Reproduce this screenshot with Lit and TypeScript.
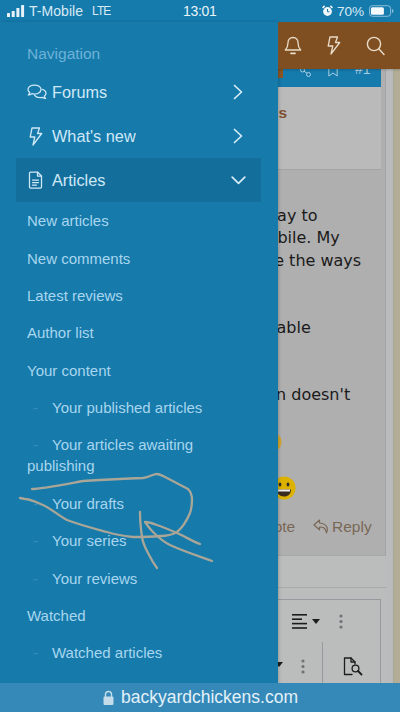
import { LitElement, html, css, svg } from "lit";
import { customElement } from "lit/decorators.js";

const sub1 = ["New articles", "New comments", "Latest reviews", "Author list", "Your content"];

const chevronRight = html`<svg class="chev" width="10" height="16" viewBox="0 0 10 16"><path d="M1.5 1.5 8.5 8l-7 6.5" fill="none" stroke="currentColor" stroke-width="1.7" stroke-linecap="round" stroke-linejoin="round"/></svg>`;
const chevronDown = html`<svg class="chev down" width="15" height="9" viewBox="0 0 15 9"><path d="M1.2 1.2 7.5 7.4l6.3-6.2" fill="none" stroke="currentColor" stroke-width="1.7" stroke-linecap="round" stroke-linejoin="round"/></svg>`;
const boltPath = "M5 1h7.5l-2 5.5h4.2L6 18l1.8-8H3.2z";

@customElement("app-root")
export class AppRoot extends LitElement {
  static styles = css`
    :host { display: block; width: 400px; height: 712px; position: relative; overflow: hidden; font-family: "Liberation Sans", Arial, sans-serif; background: #157aac; }
    .shell { display: flex; flex-direction: column; height: 712px; }
    .status { height: 22px; flex: none; background: #157aac; color: #d8ebf5; display: flex; align-items: center; font-size: 14px; padding: 0 6px 0 7px; }
    .bars { margin-right: 4px; flex: none; }
    .carrier { width: 63px; flex: none; letter-spacing: 0.05px; }
    .lte { width: 91px; flex: none; font-size: 12px; letter-spacing: -0.9px; }
    .time { width: 139px; flex: none; font-size: 14px; font-weight: 500; color: #eaf4f9; letter-spacing: -0.3px; }
    .alarm { margin-right: 4px; flex: none; }
    .pct { width: 26px; flex: none; margin-right: 6px; font-size: 13.6px; white-space: nowrap; }
    .main { flex: 1; display: flex; min-height: 0; }
    .drawer { width: 278px; flex: none; background: #167aab; box-sizing: border-box; padding: 21px 17px 0 16px; overflow: hidden; box-shadow: 1px 0 3px rgba(0,0,0,.18); z-index: 1; }
    .nav-title { font-size: 15.5px; line-height: 22px; height: 27px; padding-left: 11px; color: #6db2d8; }
    .row { height: 44px; display: flex; align-items: center; padding-left: 11px; padding-right: 18px; color: #cfe9f7; font-size: 16.3px; }
    .row.active { background: #146e9c; }
    .ico { width: 25px; flex: none; display: flex; align-items: center; }
    .label { flex: 1; }
    .chev { color: #d6edf8; }
    .chev.down { margin-right: -3px; }
    .items { padding: 0 0 0 11px; }
    .item { font-size: 15px; line-height: 21px; padding: 8.2px 0; color: #a8d6ee; }
    .dash { display: inline-block; width: 25px; box-sizing: border-box; padding-left: 6px; color: #348cba; }
    .page { flex: 1; min-width: 0; overflow: hidden; display: flex; flex-direction: column; background: #bbbdbd; position: relative; }
    .topbar { height: 47px; flex: none; background: #7f4f21; display: flex; align-items: center; gap: 23px; padding-left: 6px; color: #e9dcc8; position: relative; z-index: 1; box-shadow: 0 1px 2px rgba(0,0,0,.2); }
    .columns { flex: 1; display: flex; min-height: 0; }
    .content { width: 108px; flex: none; display: flex; flex-direction: column; }
    .rail { width: 7px; flex: none; background: #b9bbbd; }
    .tan { flex: 1; background: #b4ad95; border-left: 1px solid #a9a796; }
    .post { height: 487px; flex: none; background: #afafaf; border-right: 1px solid #a0a4a7; border-bottom: 1px solid #a4a6a7; box-sizing: border-box; display: flex; flex-direction: column; }
    .bluebar { height: 18px; flex: none; width: 103px; background: #157aac; overflow: hidden; display: flex; color: #a7cde0; }
    .tab { width: 5px; height: 9px; background: #8a5523; margin-right: 17px; }
    .bar-ico { margin-top: -7px; margin-right: 17px; }
    .bar-num { margin-top: -8px; font-size: 14px; line-height: 16px; }
    .head { height: 83px; flex: none; width: 103px; background: #bababa; border-bottom: 1px solid #a2a4a5; box-sizing: border-box; padding-top: 17px; font: bold 15.5px/18px "Liberation Sans", sans-serif; color: #7f5130; }
    .head span { display: block; margin-left: -9px; }
    .body { padding-top: 35px; font: 16px/22.4px "DejaVu Sans", sans-serif; color: #1a1a1a; white-space: nowrap; }
    .line { height: 22.4px; }
    .m1 { margin-left: -14px; }
    .m2 { margin-left: -26px; }
    .m3 { margin-left: -22px; }
    .m4 { margin-left: -20px; }
    .m5 { margin-left: -2px; }
    .emo1 { display: block; margin-left: -18px; margin-top: 2px; height: 22px; }
    .emo2 { display: block; margin-left: -6px; margin-top: 23px; height: 24px; }
    .foot { display: flex; align-items: center; color: #7a6857; font-size: 15.5px; white-space: nowrap; margin-top: 18px; }
    .quote { margin-left: -25px; width: 60px; flex: none; }
    .reply-ico { margin-right: 3px; }
    .gap { height: 31px; flex: none; border-bottom: 1px solid #a9abab; }
    .editor { margin-top: 11px; width: 103px; flex: 1; border-top: 1px solid #979b9f; border-right: 1px solid #979b9f; box-sizing: border-box; display: flex; flex-direction: column; color: #1c1c1c; }
    .tool1 { height: 42px; flex: none; display: flex; align-items: center; padding-left: 14px; }
    .tool2 { flex: 1; display: flex; }
    .caret { width: 0; height: 0; border-left: 4px solid transparent; border-right: 4px solid transparent; border-top: 5px solid #1c1c1c; margin-left: 5px; }
    .dots { margin-left: 19px; color: #6f7275; }
    .caret2 { margin-left: -3px; margin-top: 20px; }
    .dots2 { margin-left: 18px; margin-top: 17px; color: #6f7275; }
    .tool-left { width: 44px; flex: none; display: flex; align-items: flex-start; border-right: 1px solid #979b9f; }
    .finder { margin: 15px 0 0 20px; }
    .url { height: 29px; flex: none; background: #3589b8; color: #e3f1f8; font-size: 17.5px; display: flex; align-items: center; justify-content: center; gap: 6px; position: relative; z-index: 2; }
    .scribble { position: absolute; left: 0; top: 0; z-index: 3; pointer-events: none; }
  `;

  render() {
    return html`
      <div class="shell">
        <div class="status">
          <svg class="bars" width="18" height="12" viewBox="0 0 18 12" fill="#e8f3f9"><rect x="0" y="8" width="3" height="4" rx=".6"/><rect x="4.7" y="6" width="3" height="6" rx=".6"/><rect x="9.4" y="3" width="3" height="9" rx=".6"/><rect x="14.1" y="0" width="3" height="12" rx=".6"/></svg>
          <span class="carrier">T-Mobile</span>
          <span class="lte">LTE</span>
          <span class="time">13:01</span>
          <svg class="alarm" width="11" height="12" viewBox="0 0 11 12"><circle cx="5.5" cy="6.5" r="4.4" fill="#f0f6fa"/><path d="M5.5 4v2.8H7.5" fill="none" stroke="#157aac" stroke-width="1"/><path d="M.6 3 2.6.9M10.4 3 8.4.9" stroke="#f0f6fa" stroke-width="1.6"/></svg>
          <span class="pct">70%</span>
          <svg width="26" height="12" viewBox="0 0 26 12"><rect x=".5" y=".5" width="22" height="11" rx="3" fill="none" stroke="#8fc2dd"/><rect x="2" y="2" width="13.5" height="8" rx="1.6" fill="#f2f8fb"/><path d="M24 4v4c.9-.3 1.4-1 1.4-2S24.900 4.300 24 4z" fill="#8fc2dd"/></svg>
        </div>
        <div class="main">
          <nav class="drawer">
            <div class="nav-title">Navigation</div>
            <div class="row">
              <span class="ico"><svg width="20" height="17" viewBox="0 0 20 17" fill="none" stroke="currentColor" stroke-width="1.25" stroke-linejoin="round" stroke-linecap="round"><path d="M7.500 1C3.900 1 1 3 1 5.500c0 1.200.7 2.300 1.700 3.100-.2 1-.8 1.800-1.400 2.400 1.300-.1 2.600-.6 3.500-1.300.8.200 1.700.3 2.700.3 3.600 0 6.500-2 6.500-4.500S11.100 1 7.500 1z"/><path d="M15.300 5.400c2.200.6 3.700 2 3.700 3.800 0 1.200-.7 2.200-1.700 3 .2.900.8 1.700 1.300 2.300-1.300-.1-2.500-.6-3.400-1.200-.7.200-1.500.3-2.300.3-2.300 0-4.300-.9-5.300-2.300"/></svg></span>
              <span class="label">Forums</span>${chevronRight}
            </div>
            <div class="row">
              <span class="ico"><svg width="18" height="19" viewBox="0 0 18 19" fill="none" stroke="currentColor" stroke-width="1.3" stroke-linejoin="round"><path d="${boltPath}"/></svg></span>
              <span class="label">What's new</span>${chevronRight}
            </div>
            <div class="row active">
              <span class="ico"><svg width="18" height="18" viewBox="0 0 18 18" fill="none" stroke="currentColor" stroke-width="1.25" stroke-linejoin="round" stroke-linecap="round"><path d="M3.500 1h7l4 4v11a1 1 0 0 1-1 1h-10a1 1 0 0 1-1-1V2a1 1 0 0 1 1-1z"/><path d="M10.500 1v4h4M5.500 9h6M5.500 11.500h6M5.500 14h4"/></svg></span>
              <span class="label">Articles</span>${chevronDown}
            </div>
            <div class="items">
              ${sub1.map((t) => html`<div class="item">${t}</div>`)}
              <div class="item"><span class="dash">-</span>Your published articles</div>
              <div class="item"><span class="dash">-</span>Your articles awaiting publishing</div>
              <div class="item"><span class="dash">-</span>Your drafts</div>
              <div class="item"><span class="dash">-</span>Your series</div>
              <div class="item"><span class="dash">-</span>Your reviews</div>
              <div class="item">Watched</div>
              <div class="item"><span class="dash">-</span>Watched articles</div>
            </div>
          </nav>
          <div class="page">
            <div class="topbar">
              <svg width="18" height="20" viewBox="0 0 18 20" fill="none" stroke="currentColor" stroke-width="1.3" stroke-linejoin="round" stroke-linecap="round"><path d="M9 1.500c-3 0-5 2.200-5 5.200 0 4-1 5.500-2.700 7.300h15.400C15 12.200 14 10.700 14 6.700c0-3-2-5.200-5-5.200z"/><path d="M7 17.300h4" stroke-width="1.800"/></svg>
              <svg width="18" height="20" viewBox="0 0 18 20" fill="none" stroke="currentColor" stroke-width="1.3" stroke-linejoin="round"><path d="${boltPath}"/></svg>
              <svg width="19" height="20" viewBox="0 0 19 20" fill="none" stroke="currentColor" stroke-width="1.4" stroke-linecap="round"><circle cx="8" cy="8" r="6.600"/><path d="M13 13l5 5.500"/></svg>
            </div>
            <div class="columns">
              <div class="content">
                <article class="post">
                  <div class="bluebar">
                    <span class="tab"></span>
                    <svg class="bar-ico" width="11" height="15" viewBox="0 0 11 15" fill="none" stroke="currentColor" stroke-width="1"><circle cx="2.500" cy="8" r="2"/><circle cx="8.500" cy="12.500" r="2"/><path d="M4 9.200l3 2"/></svg>
                    <svg class="bar-ico" width="10" height="15" viewBox="0 0 10 15" fill="none" stroke="currentColor" stroke-width="1"><path d="M.8 0v14L5 11l4.200 3V0"/></svg>
                    <span class="bar-num">#1</span>
                  </div>
                  <div class="head"><span>ns</span></div>
                  <div class="body">
                    <div class="line m1">way to</div>
                    <div class="line m2">mobile. My</div>
                    <div class="line m3">see the ways</div>
                    <div class="line"></div>
                    <div class="line"></div>
                    <div class="line m4">usable</div>
                    <div class="line"></div>
                    <div class="line"></div>
                    <div class="line m5">n doesn't</div>
                    <div class="line"></div>
                    <svg class="emo1" width="22" height="22" viewBox="0 0 22 22"><circle cx="11" cy="11" r="10.500" fill="#d4a52a"/><circle cx="15" cy="8" r="1.400" fill="#333"/><path d="M8 14c2 3 6 3 8 0" stroke="#333" fill="none" stroke-width="1.300"/></svg>
                    <svg class="emo2" width="24" height="24" viewBox="0 0 24 24"><circle cx="12" cy="12" r="11.500" fill="#dcb100"/><ellipse cx="8" cy="8.500" rx="1.400" ry="2" fill="#2b2b2b"/><ellipse cx="16" cy="8.500" rx="1.400" ry="2" fill="#2b2b2b"/><path d="M5 13.500h14c0 4.500-3 7-7 7s-7-2.500-7-7z" fill="#3a2a20"/><path d="M6 13.500h12v2H6z" fill="#eee"/></svg>
                  </div>
                  <div class="foot">
                    <span class="quote">Quote</span>
                    <svg class="reply-ico" width="16" height="15" viewBox="0 0 16 15" fill="none" stroke="currentColor" stroke-width="1.200" stroke-linejoin="round" stroke-linecap="round"><path d="M6.500 1 1 6l5.500 4.800V8c4 0 6 1 7 5.800 1.600-3 1.800-9-7-9.800z"/></svg>
                    <span>Reply</span>
                  </div>
                </article>
                <div class="gap"></div>
                <div class="editor">
                  <div class="tool1">
                    <svg width="15" height="15" viewBox="0 0 15 15" fill="#1c1c1c"><rect y="0" width="15" height="1.600"/><rect y="4.400" width="10" height="1.600"/><rect y="8.800" width="15" height="1.600"/><rect y="13.200" width="15" height="1.600"/></svg>
                    <span class="caret"></span>
                    <svg class="dots" width="4" height="15" viewBox="0 0 4 15" fill="currentColor"><circle cx="2" cy="2" r="1.600"/><circle cx="2" cy="7.500" r="1.600"/><circle cx="2" cy="13" r="1.600"/></svg>
                  </div>
                  <div class="tool2">
                    <div class="tool-left">
                      <span class="caret caret2"></span>
                      <svg class="dots2" width="4" height="15" viewBox="0 0 4 15" fill="currentColor"><circle cx="2" cy="2" r="1.600"/><circle cx="2" cy="7.500" r="1.600"/><circle cx="2" cy="13" r="1.600"/></svg>
                    </div>
                    <svg class="finder" width="20" height="19" viewBox="0 0 20 19" fill="none" stroke="#1c1c1c" stroke-width="1.300" stroke-linejoin="round" stroke-linecap="round"><path d="M9 17.500H1.500V1h6.500l4 4v2"/><path d="M8 1v4h4"/><circle cx="12.500" cy="11.500" r="3.400"/><path d="M15 14l3.500 3.500" stroke-width="1.800"/></svg>
                  </div>
                </div>
              </div>
              <div class="rail"></div>
              <div class="tan"></div>
            </div>
          </div>
        </div>
        <div class="url">
          <svg width="13" height="16" viewBox="0 0 13 16"><path d="M3.500 7V4.500a3 3 0 0 1 6 0V7" fill="none" stroke="#c4dcea" stroke-width="1.400"/><rect x="1.500" y="6.500" width="10" height="8.500" rx="1.300" fill="#c4dcea"/></svg>
          <span>backyardchickens.com</span>
        </div>
      </div>
      <svg class="scribble" width="400" height="712" viewBox="0 0 400 712" fill="none" stroke="#a9a698" stroke-width="2.300" stroke-linecap="round" stroke-linejoin="round">
        ${svg`<path d="M32 489C40 489 50 487 83 481 100 480 117 479 143 478 150 477 153 474 157 474 160 474 163 476 167 478L188 489C191 492 192 496 192 500 192 505 191 510 190 513 187 520 182 528 177 532 172 535 166 536 160 536 150 537 142 537 133 537 124 536 116 535 107 532 92 528 80 525 67 520 58 515 50 508 43 505 36 502 30 499 25 499L20 498"/>
        <path d="M140 512C140 522 141 530 142 537 143 544 146 549 148 553 151 559 154 564 157 568"/>
        <path d="M200 544C192 541 184 536 177 533 170 530 163 527 157 525 152 523 148 522 145 522 147 525 150 529 153 532 158 537 164 542 170 545 183 551 198 556 212 561"/>`}
      </svg>
    `;
  }
}
